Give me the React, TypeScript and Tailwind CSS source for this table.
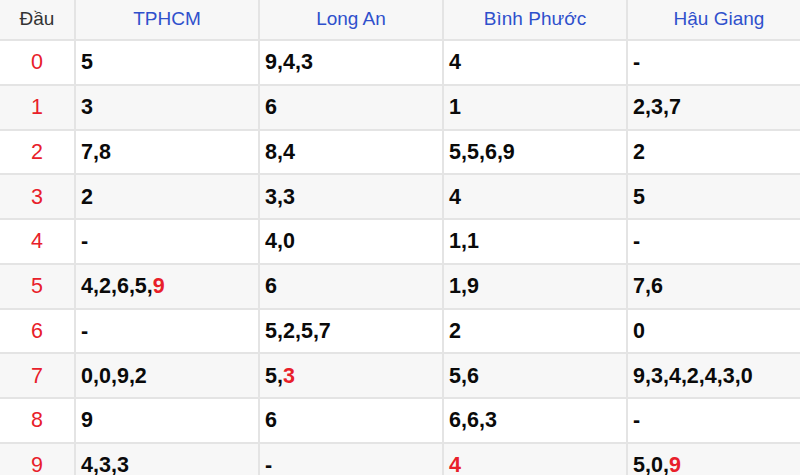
type Cell = { v: string; hot?: number[] };

const provinces = ['TPHCM', 'Long An', 'Bình Phước', 'Hậu Giang'];

// hot = index of digits that are shown in red
const rows: Cell[][] = [
  [{ v: '5' }, { v: '9,4,3' }, { v: '4' }, { v: '-' }],
  [{ v: '3' }, { v: '6' }, { v: '1' }, { v: '2,3,7' }],
  [{ v: '7,8' }, { v: '8,4' }, { v: '5,5,6,9' }, { v: '2' }],
  [{ v: '2' }, { v: '3,3' }, { v: '4' }, { v: '5' }],
  [{ v: '-' }, { v: '4,0' }, { v: '1,1' }, { v: '-' }],
  [{ v: '4,2,6,5,9', hot: [4] }, { v: '6' }, { v: '1,9' }, { v: '7,6' }],
  [{ v: '-' }, { v: '5,2,5,7' }, { v: '2' }, { v: '0' }],
  [{ v: '0,0,9,2' }, { v: '5,3', hot: [1] }, { v: '5,6' }, { v: '9,3,4,2,4,3,0' }],
  [{ v: '9' }, { v: '6' }, { v: '6,6,3' }, { v: '-' }],
  [{ v: '4,3,3' }, { v: '-' }, { v: '4', hot: [0] }, { v: '5,0,9', hot: [2] }],
];

function Digits({ cell }: { cell: Cell }) {
  const parts = cell.v.split(',');
  return (
    <>
      {parts.map((p, i) => (
        <span key={i}>
          <span className={cell.hot?.includes(i) ? 'text-[#e8202a]' : ''}>{p}</span>
          {i < parts.length - 1 && ','}
        </span>
      ))}
    </>
  );
}

export default function App() {
  return (
    <div className="w-[800px] h-[475px] overflow-hidden bg-white font-['Liberation_Sans',Arial,sans-serif]">
      <table className="border-collapse table-fixed w-[810px]">
        <colgroup>
          <col className="w-[75px]" />
          <col className="w-[184px]" />
          <col className="w-[184px]" />
          <col className="w-[184px]" />
          <col className="w-[184px]" />
        </colgroup>
        <thead>
          <tr className="h-[40px] bg-[#f7f7f7]">
            <th className="border-2 border-t-0 border-l-0 border-[#e4e4e4] text-[19px] font-normal text-[#333] text-center">
              Đầu
            </th>
            {provinces.map((p) => (
              <th
                key={p}
                className="border-2 border-t-0 border-[#e4e4e4] text-[19px] font-normal text-[#2f50cc] text-center"
              >
                {p}
              </th>
            ))}
          </tr>
        </thead>
        <tbody>
          {rows.map((r, i) => (
            <tr key={i} className={`h-[44.75px] ${i % 2 === 1 ? 'bg-[#f7f7f7]' : 'bg-white'}`}>
              <td className="border-2 border-l-0 border-[#e4e4e4] text-center text-[21.5px] text-[#e8202a]">
                {i}
              </td>
              {r.map((c, j) => (
                <td
                  key={j}
                  className="border-2 border-[#e4e4e4] px-[5px] text-[21.5px] font-bold text-[#0a0a0a]"
                >
                  <Digits cell={c} />
                </td>
              ))}
            </tr>
          ))}
        </tbody>
      </table>
    </div>
  );
}
